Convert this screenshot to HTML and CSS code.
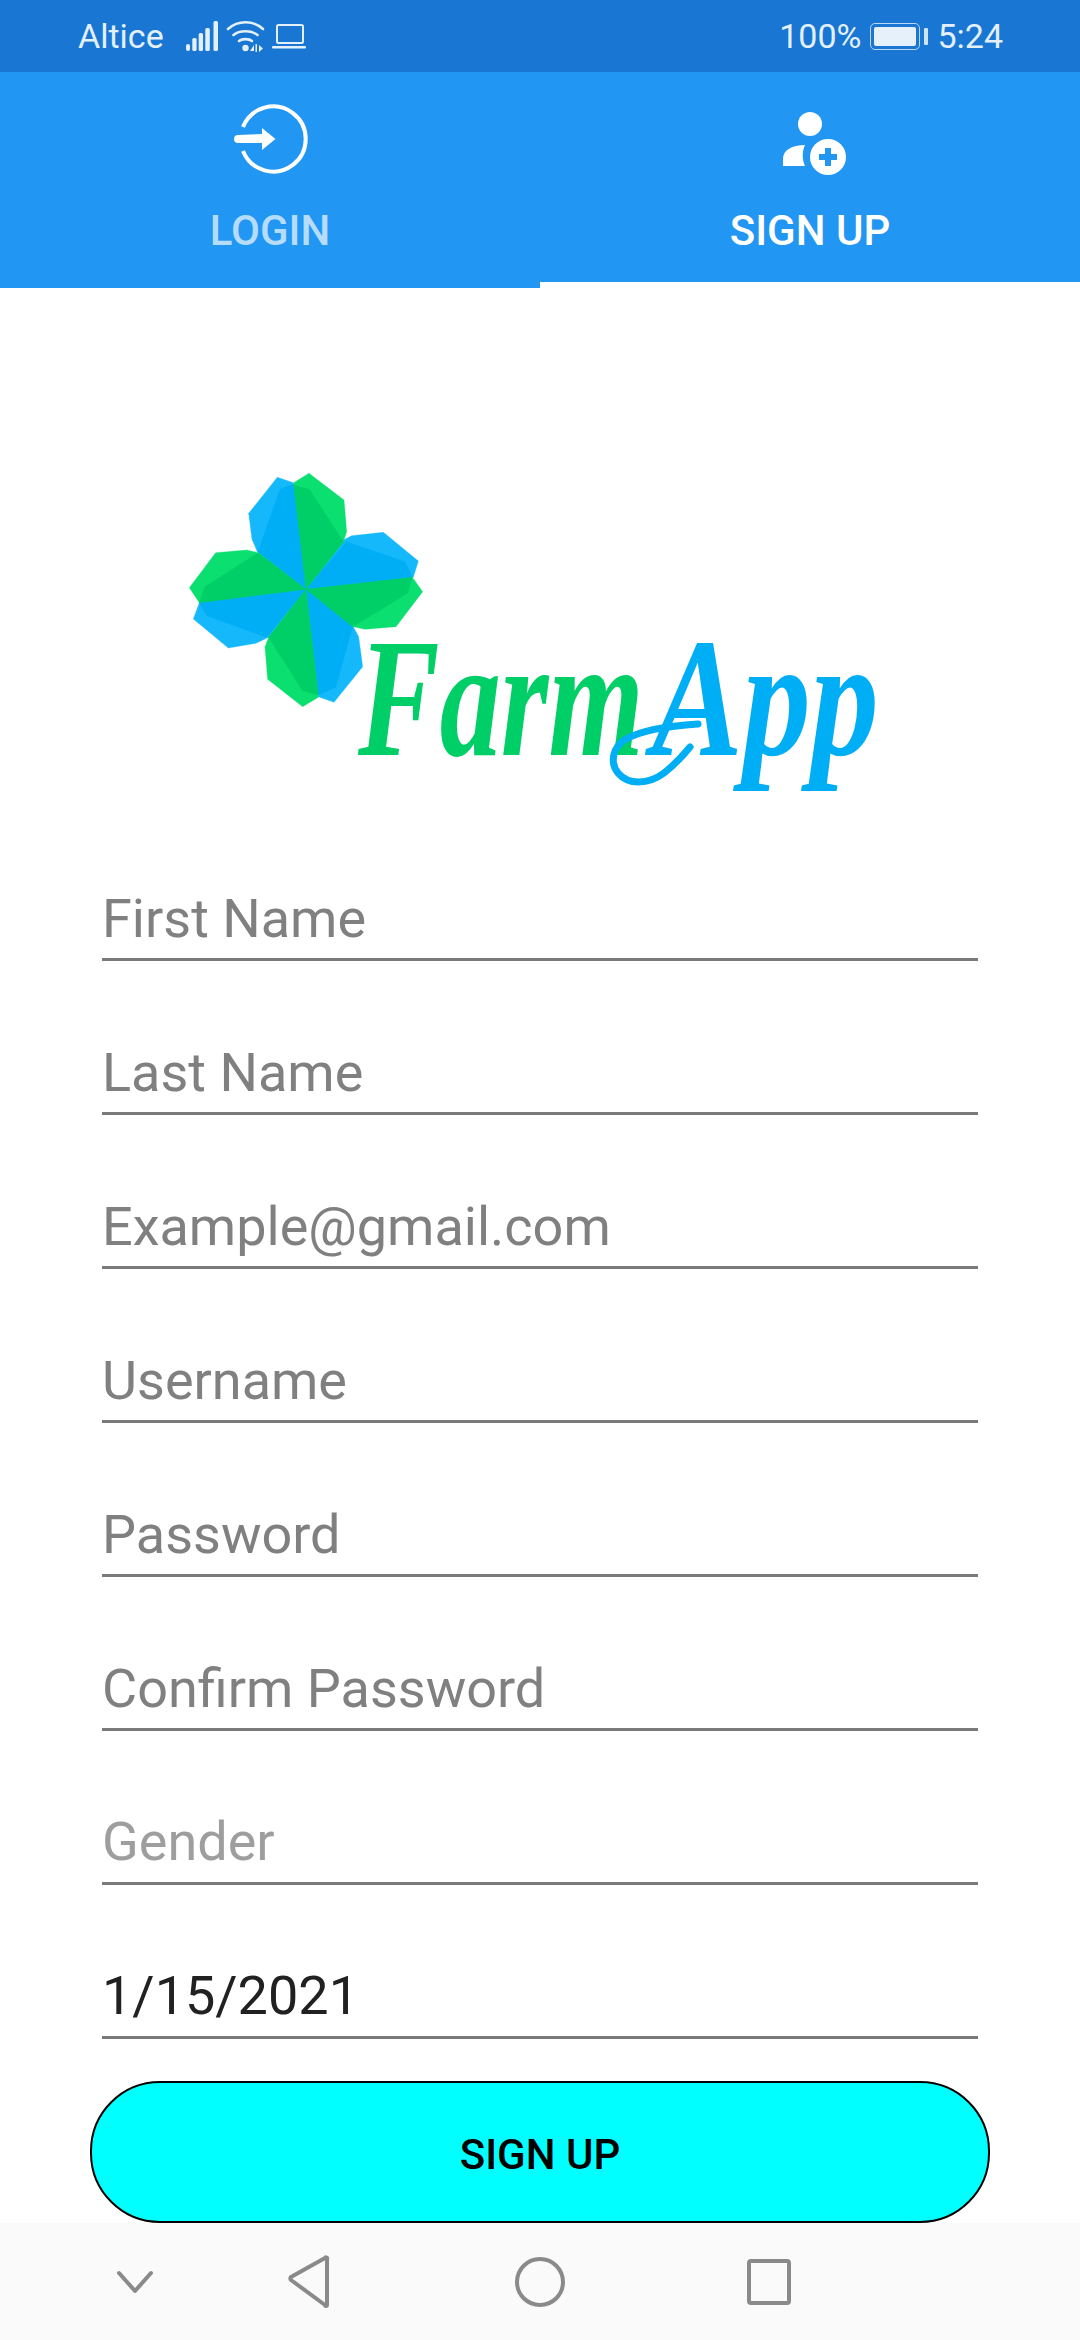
FILE: index.html
```html
<!DOCTYPE html>
<html lang="en">
<head>
  <meta charset="UTF-8">
  <title>FarmApp Sign Up</title>
  <link rel="stylesheet" href="styles.css">
</head>
<body>

  <div class="status-bar">
    <div class="status-left">
      <span class="carrier">Altice</span>
      <svg class="status-icons" width="130" height="40" viewBox="180 16 130 40">
        <g fill="#e3f0fb">
          <rect x="186" y="44" width="4" height="7" rx="2"/>
          <rect x="192.300" y="38" width="4.300" height="13" rx="1.5"/>
          <rect x="198.700" y="33" width="4.300" height="18" rx="1.5"/>
          <rect x="205.300" y="28" width="4.500" height="23" rx="1.5"/>
          <rect x="213.500" y="21" width="4.500" height="30" rx="1.5"/>
          <circle cx="245.500" cy="48" r="3.200"/>
          <path d="M254 51v-6l-4 6zM255.500 44v8h1.500v-8zM259 45v7l4-3.500z"/>
        </g>
        <g fill="none" stroke="#e3f0fb" stroke-width="2.600" stroke-linecap="round">
          <path d="M228 29c10-9 25-9 35 0"/>
          <path d="M233.500 35c6-5 18-5 24 0"/>
          <path d="M239 41c3-2.500 10-2.500 13 0"/>
        </g>
        <rect x="277" y="25" width="26" height="18" rx="1.500" fill="none" stroke="#e3f0fb" stroke-width="2"/>
        <rect x="272" y="46" width="34" height="2.500" rx="1" fill="#e3f0fb"/>
      </svg>
    </div>
    <div class="status-right">
      <span>100%</span>
      <div class="battery"><div class="battery-fill"></div></div>
      <div class="battery-tip"></div>
      <span class="clock">5:24</span>
    </div>
  </div>

  <div class="tabs">
    <div class="tab">
      <svg width="80" height="80" viewBox="230 99 80 80">
        <path d="M243 127a32.500 32.500 0 1 1 0 24" fill="none" stroke="#fff" stroke-width="4"/>
        <path d="M238 135l24-1v-6l13.500 11-13.500 11v-7l-24 0a4 4 0 0 1 0-8z" fill="#fff"/>
      </svg>
      <span class="tab-label dim">LOGIN</span>
    </div>
    <div class="tab active">
      <svg width="80" height="80" viewBox="770 103 80 80">
        <circle cx="810" cy="124" r="12" fill="#fff"/>
        <path d="M783 166v-7c0-9 9-14 22-14-3 6-3 15 0 21z" fill="#fff"/>
        <circle cx="828" cy="157" r="18" fill="#fff"/>
        <path d="M825 148h6v6h6v6h-6v6h-6v-6h-6v-6h6z" fill="#2196f3"/>
      </svg>
      <span class="tab-label">SIGN UP</span>
    </div>
  </div>

  <div class="logo">
    <svg width="720" height="340" viewBox="180 460 720 340">
      <g transform="translate(170 450) scale(.33333)">
        <g class="clover-light-blue">
          <polygon points="322,82 370,98 408,418 262,305 246,268 236,190"/>
          <polygon points="520,270 545,257 640,247 745,333 730,382 408,418"/>
          <polygon points="550,530 566,560 578,650 492,757 445,740 408,418"/>
          <polygon points="296,562 258,580 175,594 70,507 88,458 408,418"/>
        </g>
        <g class="clover-light-green">
          <polygon points="371,98 417,70 522,150 530,245 520,275 408,418"/>
          <polygon points="727,382 758,425 678,530 585,538 550,530 408,418"/>
          <polygon points="445,742 398,770 293,688 285,590 296,562 408,418"/>
          <polygon points="88,458 58,413 137,308 230,300 265,308 408,418"/>
        </g>
        <g class="clover-blue">
          <polygon points="330,118 371,102 408,418 264,305"/>
          <polygon points="530,275 705,335 727,382 408,418"/>
          <polygon points="548,530 497,712 445,735 408,418"/>
          <polygon points="290,562 110,497 88,458 408,418"/>
        </g>
        <g class="clover-green">
          <polygon points="371,105 418,118 520,275 408,418"/>
          <polygon points="727,382 712,430 548,530 408,418"/>
          <polygon points="445,735 398,722 296,562 408,418"/>
          <polygon points="88,458 105,410 265,308 408,418"/>
        </g>
      </g>
      <text class="logo-text farm" transform="translate(358 755) scale(.72 1)">Farm</text>
      <text class="logo-text app" transform="translate(652 755) scale(.8 1)">App</text>
      <path class="swash" d="M698 724c-30 2-56 6-72 15-14 8-16 24-8 34 10 12 30 12 46 0 10-8 18-16 26-26"/>
    </svg>
  </div>

  <form class="form">
    <div class="field"><input type="text" placeholder="First Name"></div>
    <div class="field"><input type="text" placeholder="Last Name"></div>
    <div class="field"><input type="email" placeholder="Example@gmail.com"></div>
    <div class="field"><input type="text" placeholder="Username"></div>
    <div class="field"><input type="password" placeholder="Password"></div>
    <div class="field"><input type="password" placeholder="Confirm Password"></div>
    <div class="field picker gender">Gender</div>
    <div class="field picker date">1/15/2021</div>
    <button type="button" class="submit">SIGN UP</button>
  </form>

  <div class="nav-bar">
    <svg width="1080" height="117" viewBox="0 2223 1080 117" fill="none" stroke="#8a8a8a" stroke-width="4" stroke-linejoin="round" stroke-linecap="round">
      <path d="M119 2273l16 18 16-18"/>
      <path d="M327 2259v46a1 1 0 0 1-2 0l-34-25a2 2 0 0 1 0-3l34-19a1 1 0 0 1 2 1z"/>
      <circle cx="540" cy="2282" r="23"/>
      <rect x="749" y="2261" width="40" height="42" rx="2"/>
    </svg>
  </div>

</body>
</html>
```

FILE: styles.css
```css
* {
  box-sizing: border-box;
}

body {
  margin: 0;
  width: 1080px;
  height: 2340px;
  overflow: hidden;
  background: #fff;
  font-family: Roboto, sans-serif;
}

.status-bar {
  height: 72px;
  background: #1976d2;
  color: #e3f0fb;
  font-size: 34px;
  padding: 0 77px 0 78px;
  display: flex;
  justify-content: space-between;
  align-items: center;
}

.status-left,
.status-right {
  display: flex;
  align-items: center;
}

.carrier {
  width: 102px;
}

.status-icons {
  display: block;
}

.battery {
  width: 50px;
  height: 27px;
  margin-left: 9px;
  padding: 3px;
  border: 1.5px solid #b9d6f2;
  border-radius: 5px;
}

.battery-fill {
  height: 100%;
  background: #e6f0fb;
  border-radius: 2px;
}

.battery-tip {
  width: 4px;
  height: 17px;
  margin-left: 4px;
  background: #cfe3f7;
  border-radius: 1px;
}

.clock {
  margin-left: 9px;
}

.tabs {
  height: 216px;
  background: #2196f3;
  display: flex;
}

.tab {
  width: 540px;
  height: 216px;
  display: flex;
  flex-direction: column;
  align-items: center;
  padding-top: 27px;
}

.tab svg {
  display: block;
}

.tab.active {
  border-bottom: 6px solid #fff;
  padding-top: 31px;
}

.tab-label {
  margin-top: 28px;
  font-size: 42px;
  font-weight: 500;
  line-height: 48px;
  color: #fff;
}

.tab.active .tab-label {
  margin-top: 24px;
}

.tab-label.dim {
  color: #b5dcfb;
}

.logo {
  height: 519px;
  padding: 172px 0 0 180px;
}

.logo svg {
  display: block;
}

.clover-light-blue polygon {
  fill: #15b8fb;
  stroke: #15b8fb;
}

.clover-light-green polygon {
  fill: #0adf70;
  stroke: #0adf70;
}

.clover-blue polygon {
  fill: #00aef5;
  stroke: #00aef5;
}

.clover-green polygon {
  fill: #00ce66;
  stroke: #00ce66;
}

.logo-text {
  font-family: "Liberation Serif", serif;
  font-size: 170px;
  font-weight: 700;
  font-style: italic;
}

.farm {
  fill: #00ce66;
}

.app {
  fill: #00aef5;
}

.swash {
  fill: none;
  stroke: #00aef5;
  stroke-width: 7;
  stroke-linecap: round;
}

.form {
  display: flex;
  flex-direction: column;
  align-items: center;
}

.field {
  width: 876px;
  height: 154px;
  border-bottom: 3px solid #7a7a7a;
  display: flex;
  align-items: flex-end;
}

.field input {
  width: 100%;
  height: 74px;
  margin-bottom: 3px;
  border: none;
  outline: none;
  background: none;
  padding: 0;
  font-family: Roboto, sans-serif;
  font-size: 54px;
}

.field input::placeholder {
  color: #808080;
  opacity: 1;
}

.picker {
  font-size: 54px;
  line-height: 74px;
  padding-bottom: 3px;
}

.gender {
  color: #9e9e9e;
}

.date {
  color: #212121;
}

.submit {
  width: 900px;
  height: 142px;
  margin-top: 42px;
  padding-top: 6px;
  background: #0ff;
  border: 2px solid #000;
  border-radius: 70px;
  color: #000;
  font-family: Roboto, sans-serif;
  font-size: 42px;
  font-weight: 500;
}

.nav-bar {
  height: 117px;
  background: #fafafa;
}

.nav-bar svg {
  display: block;
}
```
